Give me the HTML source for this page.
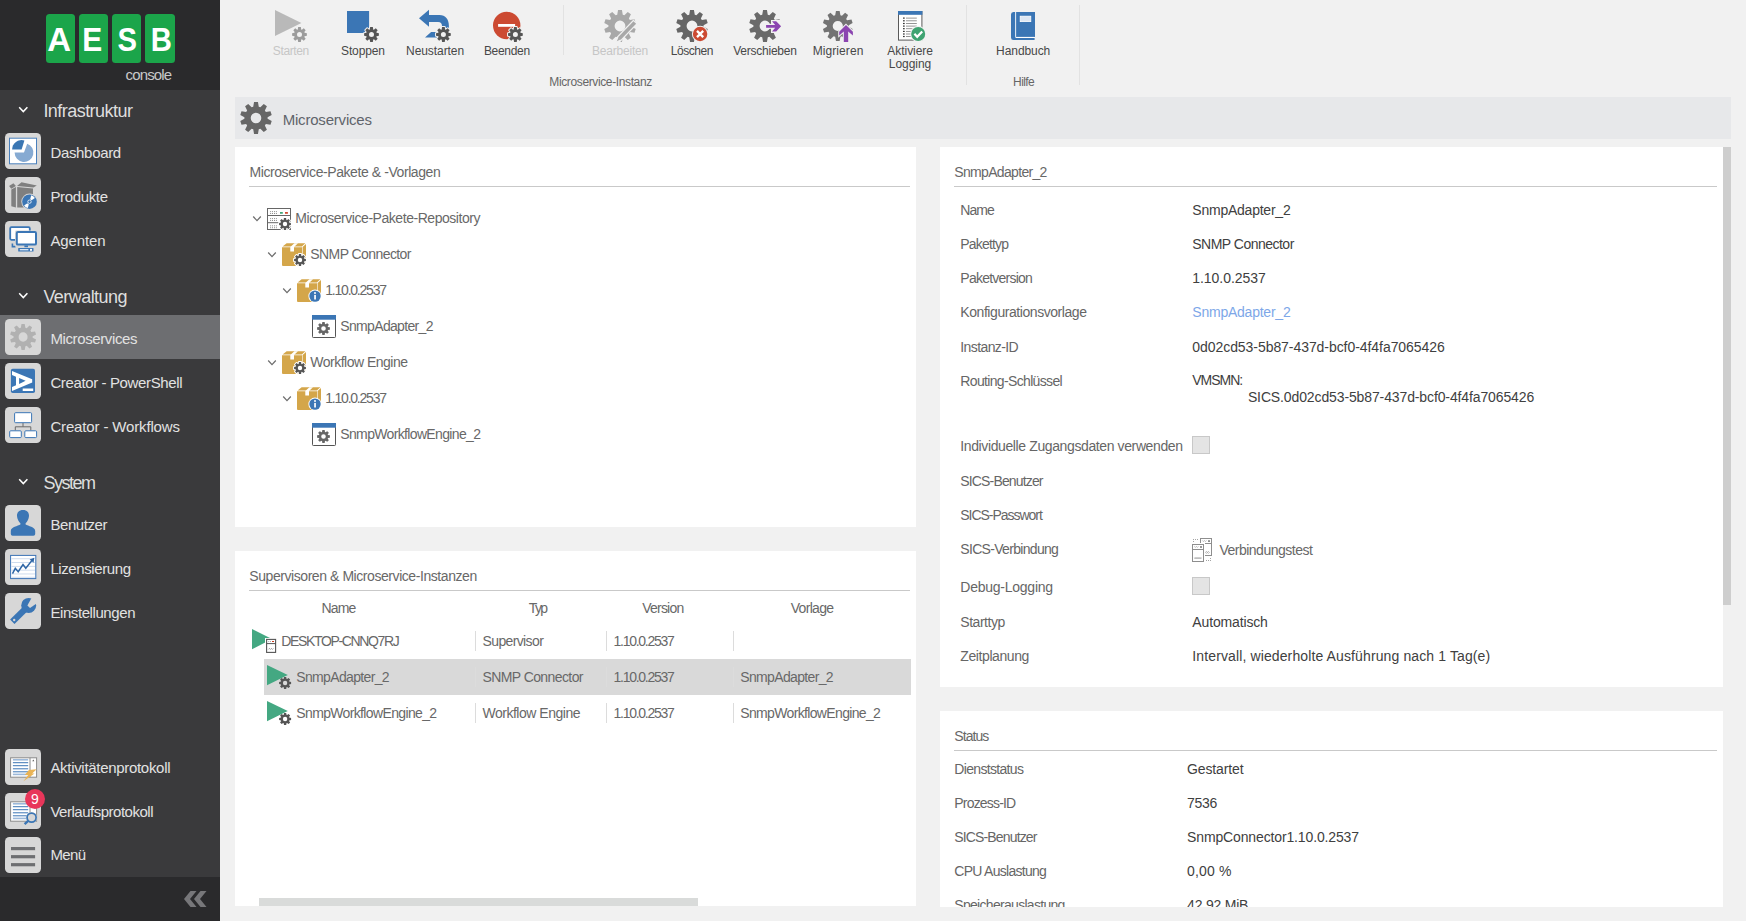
<!DOCTYPE html>
<html lang="de"><head><meta charset="utf-8"><title>AESB console - Microservices</title>
<style>
html,body{margin:0;padding:0;}
body{width:1746px;height:921px;overflow:hidden;background:#f1f1f1;position:relative;font-family:"Liberation Sans",sans-serif;}
.r{position:absolute;}
.t{position:absolute;white-space:nowrap;line-height:20px;height:20px;}
svg{position:absolute;overflow:visible;}
</style></head>
<body>
<div class="r" style="left:0px;top:0px;width:220px;height:921px;background:#3a3a3c;"></div>
<div class="r" style="left:0px;top:0px;width:220px;height:90px;background:#2a2a2c;"></div>
<div class="r" style="left:0px;top:877px;width:220px;height:44px;background:#2a2a2c;"></div>
<div class="r" style="left:45.5px;top:14px;width:29.2px;height:49px;background:#1ba54a;border-radius:3.5px;"></div>
<div class="r" style="left:78.8px;top:14px;width:29.2px;height:49px;background:#1ba54a;border-radius:3.5px;"></div>
<div class="r" style="left:112.1px;top:14px;width:29.2px;height:49px;background:#1ba54a;border-radius:3.5px;"></div>
<div class="r" style="left:145.4px;top:14px;width:29.2px;height:49px;background:#1ba54a;border-radius:3.5px;"></div>
<span class="t" style="left:47.02px;top:29.22px;font-size:34px;color:#ffffff;font-weight:bold;transform:scaleX(0.97);">A</span>
<span class="t" style="left:81.26px;top:29.22px;font-size:34px;color:#ffffff;font-weight:bold;transform:scaleX(0.88);">E</span>
<span class="t" style="left:115.86px;top:29.22px;font-size:34px;color:#ffffff;font-weight:bold;transform:scaleX(0.86);">S</span>
<span class="t" style="left:148.92px;top:29.22px;font-size:34px;color:#ffffff;font-weight:bold;transform:scaleX(0.86);">B</span>
<span class="t" style="left:125.50px;top:64.60px;font-size:15px;color:#c9c9c9;letter-spacing:-0.834px;">console</span>
<svg style="left:18px;top:105px" width="11" height="9" viewBox="0 0 11 9"><path d="M1.2 2.2 L5.3 6.6 L9.4 2.2" fill="none" stroke="#ffffff" stroke-width="1.5"/></svg>
<span class="t" style="left:43.40px;top:100.56px;font-size:18px;color:#dedede;letter-spacing:-0.544px;">Infrastruktur</span>
<svg style="left:18px;top:291px" width="11" height="9" viewBox="0 0 11 9"><path d="M1.2 2.2 L5.3 6.6 L9.4 2.2" fill="none" stroke="#ffffff" stroke-width="1.5"/></svg>
<span class="t" style="left:43.40px;top:286.56px;font-size:18px;color:#dedede;letter-spacing:-0.551px;">Verwaltung</span>
<svg style="left:18px;top:477px" width="11" height="9" viewBox="0 0 11 9"><path d="M1.2 2.2 L5.3 6.6 L9.4 2.2" fill="none" stroke="#ffffff" stroke-width="1.5"/></svg>
<span class="t" style="left:43.40px;top:472.56px;font-size:18px;color:#dedede;letter-spacing:-1.483px;">System</span>
<div class="r" style="left:0px;top:315px;width:220px;height:44px;background:#6d6e71;"></div>
<div class="r" style="left:5px;top:133px;width:36px;height:36px;background:#d7d7d7;border-radius:4.5px;"></div>
<svg style="left:5px;top:133px" width="36" height="36" viewBox="0 0 36 36"><rect x="4.5" y="5.2" width="27" height="25.6" fill="#fff" stroke="#4a80bc" stroke-width="1"/><path d="M19 19.6 L22.2 10.75 A9.4 9.4 0 1 1 9.6 19.6 Z" fill="#86aad2"/><path d="M16.6 16.6 L7.1 16.6 A9.5 9.5 0 0 1 19.4 7.5 Z" fill="#3a76b3"/></svg>
<span class="t" style="left:50.40px;top:142.60px;font-size:15px;color:#e2e2e2;letter-spacing:-0.323px;">Dashboard</span>
<div class="r" style="left:5px;top:177px;width:36px;height:36px;background:#d7d7d7;border-radius:4.5px;"></div>
<svg style="left:5px;top:177px" width="36" height="36" viewBox="0 0 36 36"><path d="M6.3 12.4 L10.9 9.9 L10.9 30.6 L6.3 29.2 Z" fill="#7f7f7f"/><path d="M12.2 9.9 L28 11.4 L28 30.6 L12.2 30.6 Z" fill="#7f7f7f"/><path d="M4.1 9.1 L8.4 6.2 L10.9 8.9 L6.3 11.7 Z" fill="#7f7f7f"/><path d="M12 9 L16.5 5.3 L31.8 8.6 L28.4 10.6 Z" fill="#7f7f7f"/><circle cx="24.5" cy="24.7" r="8.2" fill="#d7d7d7"/><circle cx="24.5" cy="24.7" r="7.3" fill="#3b76b5"/><path d="M25.17 22.19L26.21 18.32A6.6 6.6 0 0 1 29.91 20.91L26.63 23.21A2.6 2.6 0 0 0 25.17 22.19Z M23.83 27.21L22.79 31.08A6.6 6.6 0 0 1 19.09 28.49L22.37 26.19A2.6 2.6 0 0 0 23.83 27.21Z" fill="#fff"/><circle cx="24.5" cy="24.7" r="1.7" fill="none" stroke="#fff" stroke-width="0.8"/></svg>
<span class="t" style="left:50.40px;top:186.60px;font-size:15px;color:#e2e2e2;letter-spacing:-0.348px;">Produkte</span>
<div class="r" style="left:5px;top:221px;width:36px;height:36px;background:#d7d7d7;border-radius:4.5px;"></div>
<svg style="left:5px;top:221px" width="36" height="36" viewBox="0 0 36 36"><rect x="5.2" y="6.2" width="19.6" height="12.6" rx="1.2" fill="#fff" stroke="#3b76b5" stroke-width="1.8"/><path d="M7.4 22.6 L7.4 25.6 L10.6 25.6" fill="none" stroke="#3b76b5" stroke-width="1.6"/><rect x="10" y="9.6" width="23.6" height="16" rx="1.2" fill="#d7d7d7"/><rect x="11.8" y="11" width="19.2" height="12.6" rx="1.2" fill="#fff" stroke="#3b76b5" stroke-width="2"/><rect x="19.4" y="24.4" width="3.6" height="1.8" fill="#3b76b5"/><rect x="13.2" y="27" width="15.3" height="3.6" rx="0.6" fill="#3b76b5"/><rect x="14.8" y="28.2" width="8.6" height="1.1" fill="#fff"/><rect x="25" y="27.9" width="2" height="1.9" fill="#fff"/></svg>
<span class="t" style="left:50.40px;top:230.60px;font-size:15px;color:#e2e2e2;letter-spacing:-0.131px;">Agenten</span>
<div class="r" style="left:5px;top:319px;width:36px;height:36px;background:#d7d7d7;border-radius:4.5px;"></div>
<svg style="left:5px;top:319px" width="36" height="36" viewBox="0 0 36 36"><path fill-rule="evenodd" fill="#b1b1b1" d="M15.81 8.71L16.50 4.90L19.70 4.90L20.39 8.71A9.57 9.57 0 0 1 21.71 9.14L24.50 6.46L27.10 8.34L25.41 11.83A9.57 9.57 0 0 1 26.23 12.95L30.06 12.43L31.06 15.48L27.64 17.30A9.57 9.57 0 0 1 27.64 18.70L31.06 20.52L30.06 23.57L26.23 23.05A9.57 9.57 0 0 1 25.41 24.17L27.10 27.66L24.50 29.54L21.71 26.86A9.57 9.57 0 0 1 20.39 27.29L19.70 31.10L16.50 31.10L15.81 27.29A9.57 9.57 0 0 1 14.49 26.86L11.70 29.54L9.10 27.66L10.79 24.17A9.57 9.57 0 0 1 9.97 23.05L6.14 23.57L5.14 20.52L8.56 18.70A9.57 9.57 0 0 1 8.56 17.30L5.14 15.48L6.14 12.43L9.97 12.95A9.57 9.57 0 0 1 10.79 11.83L9.10 8.34L11.70 6.46L14.49 9.14A9.57 9.57 0 0 1 15.81 8.71ZM22.55 18.00A4.46 4.46 0 1 0 13.65 18.00A4.46 4.46 0 1 0 22.55 18.00Z"/></svg>
<span class="t" style="left:50.40px;top:328.60px;font-size:15px;color:#e2e2e2;letter-spacing:-0.382px;">Microservices</span>
<div class="r" style="left:5px;top:363px;width:36px;height:36px;background:#d7d7d7;border-radius:4.5px;"></div>
<svg style="left:5px;top:363px" width="36" height="36" viewBox="0 0 36 36"><rect x="5.9" y="5.8" width="24.1" height="24.2" rx="1.8" fill="#3b76b5"/><path fill="#fff" fill-rule="evenodd" d="M7 7.9 L27.2 16.2 L27.2 19.6 L7 28.1 L7 24 L11 22.3 L11 13.7 L7 12 Z M14.1 15 L20.6 17.8 L14.1 20.9 Z"/><rect x="17.7" y="25.5" width="10.5" height="2.5" fill="#fff"/></svg>
<span class="t" style="left:50.40px;top:372.60px;font-size:15px;color:#e2e2e2;letter-spacing:-0.375px;">Creator - PowerShell</span>
<div class="r" style="left:5px;top:407px;width:36px;height:36px;background:#d7d7d7;border-radius:4.5px;"></div>
<svg style="left:5px;top:407px" width="36" height="36" viewBox="0 0 36 36"><path d="M18 15.8 L18 19.8 M10.3 23.4 L10.3 19.8 L25.8 19.8 L25.8 23.4" fill="none" stroke="#6a6a6a" stroke-width="1"/><rect x="9.6" y="5.7" width="17" height="10" rx="1" fill="#fff" stroke="#3b76b5" stroke-width="1"/><rect x="4.7" y="23.8" width="11.6" height="6.8" rx="1" fill="#fff" stroke="#3b76b5" stroke-width="1"/><rect x="19.8" y="23.8" width="11.8" height="6.8" rx="1" fill="#fff" stroke="#3b76b5" stroke-width="1"/></svg>
<span class="t" style="left:50.40px;top:416.60px;font-size:15px;color:#e2e2e2;letter-spacing:-0.147px;">Creator - Workflows</span>
<div class="r" style="left:5px;top:505px;width:36px;height:36px;background:#d7d7d7;border-radius:4.5px;"></div>
<svg style="left:5px;top:505px" width="36" height="36" viewBox="0 0 36 36"><path fill="#3b76b5" d="M18 5 C22 5 24.2 7.6 24 11 C23.8 14.4 22.2 16.8 20.6 18.2 L20.6 19.4 C23 21 30.2 21.6 30.2 26 L30.2 29 Q30.2 30.8 28.4 30.8 L7.6 30.8 Q5.8 30.8 5.8 29 L5.8 26 C5.8 21.6 13 21 15.4 19.4 L15.4 18.2 C13.8 16.8 12.2 14.4 12 11 C11.8 7.6 14 5 18 5 Z"/></svg>
<span class="t" style="left:50.40px;top:514.60px;font-size:15px;color:#e2e2e2;letter-spacing:-0.420px;">Benutzer</span>
<div class="r" style="left:5px;top:549px;width:36px;height:36px;background:#d7d7d7;border-radius:4.5px;"></div>
<svg style="left:5px;top:549px" width="36" height="36" viewBox="0 0 36 36"><rect x="5.6" y="6.4" width="25.2" height="23.2" fill="#fff" stroke="#3b73b5" stroke-width="1"/><rect x="6.4" y="9.3" width="23.6" height="0.9" fill="#c9d8ec"/><rect x="6.4" y="13.1" width="23.6" height="0.9" fill="#c9d8ec"/><rect x="6.4" y="16.9" width="23.6" height="0.9" fill="#c9d8ec"/><rect x="6.4" y="20.7" width="23.6" height="0.9" fill="#c9d8ec"/><rect x="6.4" y="24.5" width="23.6" height="0.9" fill="#c9d8ec"/><rect x="6.4" y="27.8" width="23.6" height="0.9" fill="#c9d8ec"/><path d="M7.5 24.6 L10.3 19.3 L13.2 22.7 L18 15.5 L20.8 19.3 L27 11.4" fill="none" stroke="#2d65a5" stroke-width="1.5"/><path d="M29.2 8.8 L28.6 13.8 L24.6 10.4 Z" fill="#2d65a5"/></svg>
<span class="t" style="left:50.40px;top:558.60px;font-size:15px;color:#e2e2e2;letter-spacing:-0.405px;">Lizensierung</span>
<div class="r" style="left:5px;top:593px;width:36px;height:36px;background:#d7d7d7;border-radius:4.5px;"></div>
<svg style="left:5px;top:593px" width="36" height="36" viewBox="0 0 36 36"><path d="M5.1 26.6 L9.5 31.1 L22.2 18.6 L17.6 14.2 Z" fill="#3b76b5"/><circle cx="23.7" cy="12.4" r="7.5" fill="#3b76b5"/><path d="M27.2 3.8 L22.4 12.6 L25 15 L33 9.6 L33 2 Z" fill="#d7d7d7"/><circle cx="9.2" cy="27" r="1.2" fill="#d7d7d7"/></svg>
<span class="t" style="left:50.40px;top:602.60px;font-size:15px;color:#e2e2e2;letter-spacing:-0.414px;">Einstellungen</span>
<div class="r" style="left:5px;top:749px;width:36px;height:36px;background:#d7d7d7;border-radius:4.5px;"></div>
<svg style="left:5px;top:749px" width="36" height="36" viewBox="0 0 36 36"><rect x="5.6" y="8.8" width="26" height="19.4" fill="#fff" stroke="#8a8a8a" stroke-width="1"/><path d="M25 8.8 L25 28.2" stroke="#8a8a8a" stroke-width="1"/><rect x="7.9" y="10.0" width="15.3" height="1.6" fill="#9db9da"/><rect x="7.9" y="13.2" width="15.3" height="1" fill="#3b76b5"/><rect x="7.9" y="16.2" width="15.3" height="1" fill="#3b76b5"/><rect x="7.9" y="19.3" width="15.3" height="1" fill="#3b76b5"/><rect x="7.9" y="22.3" width="15.3" height="1" fill="#3b76b5"/><rect x="7.9" y="24.6" width="15.3" height="1.6" fill="#9db9da"/><path d="M27.3 12.2 L29.3 12.2 L28.3 10.6 Z" fill="#555"/><path d="M23.9 20.9 L31.6 20.2 L27.2 24.6 L29.6 24.6 L18.4 32.2 L23.2 26.1 L19.8 26.1 Z" fill="#e9b355"/></svg>
<span class="t" style="left:50.40px;top:757.60px;font-size:15px;color:#e2e2e2;letter-spacing:-0.305px;">Aktivitätenprotokoll</span>
<div class="r" style="left:5px;top:793px;width:36px;height:36px;background:#d7d7d7;border-radius:4.5px;"></div>
<svg style="left:5px;top:793px" width="36" height="36" viewBox="0 0 36 36"><rect x="5.6" y="8.8" width="26" height="19.4" fill="#fff" stroke="#8a8a8a" stroke-width="1"/><path d="M25 8.8 L25 28.2" stroke="#8a8a8a" stroke-width="1"/><rect x="7.9" y="10.0" width="15.3" height="1.6" fill="#9db9da"/><rect x="7.9" y="13.2" width="15.3" height="1" fill="#3b76b5"/><rect x="7.9" y="16.2" width="15.3" height="1" fill="#3b76b5"/><rect x="7.9" y="19.3" width="15.3" height="1" fill="#3b76b5"/><rect x="7.9" y="22.3" width="15.3" height="1" fill="#3b76b5"/><rect x="7.9" y="24.6" width="15.3" height="1.6" fill="#9db9da"/><circle cx="26.6" cy="24.6" r="5.6" fill="#d7d7d7"/><circle cx="26.6" cy="24.6" r="4.5" fill="#d7d7d7" stroke="#3b76b5" stroke-width="1.7"/><path d="M23.2 27.8 L19.6 31.2" stroke="#3b76b5" stroke-width="2.3"/></svg>
<span class="t" style="left:50.40px;top:801.60px;font-size:15px;color:#e2e2e2;letter-spacing:-0.488px;">Verlaufsprotokoll</span>
<div class="r" style="left:5px;top:837px;width:36px;height:36px;background:#d7d7d7;border-radius:4.5px;"></div>
<svg style="left:5px;top:837px" width="36" height="36" viewBox="0 0 36 36"><rect x="6" y="10" width="24.1" height="3.2" fill="#6d6e71"/><rect x="6" y="18.1" width="24.1" height="3.2" fill="#6d6e71"/><rect x="6" y="26.1" width="24.1" height="3.2" fill="#6d6e71"/></svg>
<span class="t" style="left:50.40px;top:845.10px;font-size:15px;color:#e2e2e2;letter-spacing:-0.641px;">Menü</span>
<div class="r" style="left:25px;top:789.2px;width:19.8px;height:19.8px;border-radius:10px;background:#e8365a;"></div>
<span class="t" style="left:31.11px;top:789.45px;font-size:14px;color:#ffffff;">9</span>
<svg style="left:183px;top:890px" width="24" height="18" viewBox="0 0 24 18"><path d="M7.5 1 L13.5 1 L7 9 L13.5 17 L7.5 17 L1 9 Z M17.5 1 L23.5 1 L17 9 L23.5 17 L17.5 17 L11 9 Z" fill="#77777a"/></svg>
<svg style="left:275px;top:10px" width="32" height="32" viewBox="0 0 32 32"><path d="M0 0 L26.4 13 L0 26 Z" fill="#b9b9b9"/><path fill="#f1f1f1" stroke="#f1f1f1" stroke-width="2" stroke-linejoin="round" d="M22.78 19.38L23.16 17.12L25.84 17.12L26.22 19.38A5.40 5.40 0 0 1 26.90 19.66L28.77 18.33L30.67 20.23L29.34 22.10A5.40 5.40 0 0 1 29.62 22.78L31.88 23.16L31.88 25.84L29.62 26.22A5.40 5.40 0 0 1 29.34 26.90L30.67 28.77L28.77 30.67L26.90 29.34A5.40 5.40 0 0 1 26.22 29.62L25.84 31.88L23.16 31.88L22.78 29.62A5.40 5.40 0 0 1 22.10 29.34L20.23 30.67L18.33 28.77L19.66 26.90A5.40 5.40 0 0 1 19.38 26.22L17.12 25.84L17.12 23.16L19.38 22.78A5.40 5.40 0 0 1 19.66 22.10L18.33 20.23L20.23 18.33L22.10 19.66A5.40 5.40 0 0 1 22.78 19.38ZM24.51 24.50A0.01 0.01 0 1 0 24.49 24.50A0.01 0.01 0 1 0 24.51 24.50Z"/><path fill-rule="evenodd" fill="#9c9c9c" d="M22.78 19.38L23.16 17.12L25.84 17.12L26.22 19.38A5.40 5.40 0 0 1 26.90 19.66L28.77 18.33L30.67 20.23L29.34 22.10A5.40 5.40 0 0 1 29.62 22.78L31.88 23.16L31.88 25.84L29.62 26.22A5.40 5.40 0 0 1 29.34 26.90L30.67 28.77L28.77 30.67L26.90 29.34A5.40 5.40 0 0 1 26.22 29.62L25.84 31.88L23.16 31.88L22.78 29.62A5.40 5.40 0 0 1 22.10 29.34L20.23 30.67L18.33 28.77L19.66 26.90A5.40 5.40 0 0 1 19.38 26.22L17.12 25.84L17.12 23.16L19.38 22.78A5.40 5.40 0 0 1 19.66 22.10L18.33 20.23L20.23 18.33L22.10 19.66A5.40 5.40 0 0 1 22.78 19.38ZM27.00 24.50A2.50 2.50 0 1 0 22.00 24.50A2.50 2.50 0 1 0 27.00 24.50Z"/></svg>
<span class="t" style="left:272.80px;top:40.84px;font-size:12px;color:#c6c6c6;letter-spacing:-0.365px;">Starten</span>
<svg style="left:347px;top:10px" width="32" height="32" viewBox="0 0 32 32"><rect x="0" y="1" width="22.1" height="22" fill="#3b76b5"/><path fill="#f1f1f1" stroke="#f1f1f1" stroke-width="2" stroke-linejoin="round" d="M22.78 19.38L23.16 17.12L25.84 17.12L26.22 19.38A5.40 5.40 0 0 1 26.90 19.66L28.77 18.33L30.67 20.23L29.34 22.10A5.40 5.40 0 0 1 29.62 22.78L31.88 23.16L31.88 25.84L29.62 26.22A5.40 5.40 0 0 1 29.34 26.90L30.67 28.77L28.77 30.67L26.90 29.34A5.40 5.40 0 0 1 26.22 29.62L25.84 31.88L23.16 31.88L22.78 29.62A5.40 5.40 0 0 1 22.10 29.34L20.23 30.67L18.33 28.77L19.66 26.90A5.40 5.40 0 0 1 19.38 26.22L17.12 25.84L17.12 23.16L19.38 22.78A5.40 5.40 0 0 1 19.66 22.10L18.33 20.23L20.23 18.33L22.10 19.66A5.40 5.40 0 0 1 22.78 19.38ZM24.51 24.50A0.01 0.01 0 1 0 24.49 24.50A0.01 0.01 0 1 0 24.51 24.50Z"/><path fill-rule="evenodd" fill="#555555" d="M22.78 19.38L23.16 17.12L25.84 17.12L26.22 19.38A5.40 5.40 0 0 1 26.90 19.66L28.77 18.33L30.67 20.23L29.34 22.10A5.40 5.40 0 0 1 29.62 22.78L31.88 23.16L31.88 25.84L29.62 26.22A5.40 5.40 0 0 1 29.34 26.90L30.67 28.77L28.77 30.67L26.90 29.34A5.40 5.40 0 0 1 26.22 29.62L25.84 31.88L23.16 31.88L22.78 29.62A5.40 5.40 0 0 1 22.10 29.34L20.23 30.67L18.33 28.77L19.66 26.90A5.40 5.40 0 0 1 19.38 26.22L17.12 25.84L17.12 23.16L19.38 22.78A5.40 5.40 0 0 1 19.66 22.10L18.33 20.23L20.23 18.33L22.10 19.66A5.40 5.40 0 0 1 22.78 19.38ZM27.00 24.50A2.50 2.50 0 1 0 22.00 24.50A2.50 2.50 0 1 0 27.00 24.50Z"/></svg>
<span class="t" style="left:341.00px;top:40.84px;font-size:12px;color:#484848;letter-spacing:-0.118px;">Stoppen</span>
<svg style="left:419px;top:10px" width="32" height="32" viewBox="0 0 32 32"><path fill="#3b76b5" d="M0 8.3 L10 -0.2 L10 5.1 L20.5 5.1 C26.5 5.1 29.9 9.5 29.9 16 L29.9 18 L23 18 L23 16 C23 13.4 21.6 11.9 19.2 11.9 L10 11.9 L10 16.8 Z"/><path fill="#3b76b5" d="M6 27.6 L12.1 22.1 L18 22.1 L18 27.6 Z"/><path fill="#f1f1f1" stroke="#f1f1f1" stroke-width="2" stroke-linejoin="round" d="M22.68 19.38L23.06 17.12L25.74 17.12L26.12 19.38A5.40 5.40 0 0 1 26.80 19.66L28.67 18.33L30.57 20.23L29.24 22.10A5.40 5.40 0 0 1 29.52 22.78L31.78 23.16L31.78 25.84L29.52 26.22A5.40 5.40 0 0 1 29.24 26.90L30.57 28.77L28.67 30.67L26.80 29.34A5.40 5.40 0 0 1 26.12 29.62L25.74 31.88L23.06 31.88L22.68 29.62A5.40 5.40 0 0 1 22.00 29.34L20.13 30.67L18.23 28.77L19.56 26.90A5.40 5.40 0 0 1 19.28 26.22L17.02 25.84L17.02 23.16L19.28 22.78A5.40 5.40 0 0 1 19.56 22.10L18.23 20.23L20.13 18.33L22.00 19.66A5.40 5.40 0 0 1 22.68 19.38ZM24.41 24.50A0.01 0.01 0 1 0 24.39 24.50A0.01 0.01 0 1 0 24.41 24.50Z"/><path fill-rule="evenodd" fill="#555555" d="M22.68 19.38L23.06 17.12L25.74 17.12L26.12 19.38A5.40 5.40 0 0 1 26.80 19.66L28.67 18.33L30.57 20.23L29.24 22.10A5.40 5.40 0 0 1 29.52 22.78L31.78 23.16L31.78 25.84L29.52 26.22A5.40 5.40 0 0 1 29.24 26.90L30.57 28.77L28.67 30.67L26.80 29.34A5.40 5.40 0 0 1 26.12 29.62L25.74 31.88L23.06 31.88L22.68 29.62A5.40 5.40 0 0 1 22.00 29.34L20.13 30.67L18.23 28.77L19.56 26.90A5.40 5.40 0 0 1 19.28 26.22L17.02 25.84L17.02 23.16L19.28 22.78A5.40 5.40 0 0 1 19.56 22.10L18.23 20.23L20.13 18.33L22.00 19.66A5.40 5.40 0 0 1 22.68 19.38ZM26.90 24.50A2.50 2.50 0 1 0 21.90 24.50A2.50 2.50 0 1 0 26.90 24.50Z"/></svg>
<span class="t" style="left:406.10px;top:40.84px;font-size:12px;color:#484848;letter-spacing:-0.078px;">Neustarten</span>
<svg style="left:491px;top:10px" width="32" height="32" viewBox="0 0 32 32"><circle cx="15.7" cy="15.5" r="13.7" fill="#cc4a32"/><rect x="7.1" y="14" width="17" height="2.8" fill="#fff"/><path fill="#f1f1f1" stroke="#f1f1f1" stroke-width="2" stroke-linejoin="round" d="M22.68 19.38L23.06 17.12L25.74 17.12L26.12 19.38A5.40 5.40 0 0 1 26.80 19.66L28.67 18.33L30.57 20.23L29.24 22.10A5.40 5.40 0 0 1 29.52 22.78L31.78 23.16L31.78 25.84L29.52 26.22A5.40 5.40 0 0 1 29.24 26.90L30.57 28.77L28.67 30.67L26.80 29.34A5.40 5.40 0 0 1 26.12 29.62L25.74 31.88L23.06 31.88L22.68 29.62A5.40 5.40 0 0 1 22.00 29.34L20.13 30.67L18.23 28.77L19.56 26.90A5.40 5.40 0 0 1 19.28 26.22L17.02 25.84L17.02 23.16L19.28 22.78A5.40 5.40 0 0 1 19.56 22.10L18.23 20.23L20.13 18.33L22.00 19.66A5.40 5.40 0 0 1 22.68 19.38ZM24.41 24.50A0.01 0.01 0 1 0 24.39 24.50A0.01 0.01 0 1 0 24.41 24.50Z"/><path fill-rule="evenodd" fill="#555555" d="M22.68 19.38L23.06 17.12L25.74 17.12L26.12 19.38A5.40 5.40 0 0 1 26.80 19.66L28.67 18.33L30.57 20.23L29.24 22.10A5.40 5.40 0 0 1 29.52 22.78L31.78 23.16L31.78 25.84L29.52 26.22A5.40 5.40 0 0 1 29.24 26.90L30.57 28.77L28.67 30.67L26.80 29.34A5.40 5.40 0 0 1 26.12 29.62L25.74 31.88L23.06 31.88L22.68 29.62A5.40 5.40 0 0 1 22.00 29.34L20.13 30.67L18.23 28.77L19.56 26.90A5.40 5.40 0 0 1 19.28 26.22L17.02 25.84L17.02 23.16L19.28 22.78A5.40 5.40 0 0 1 19.56 22.10L18.23 20.23L20.13 18.33L22.00 19.66A5.40 5.40 0 0 1 22.68 19.38ZM26.90 24.50A2.50 2.50 0 1 0 21.90 24.50A2.50 2.50 0 1 0 26.90 24.50Z"/></svg>
<span class="t" style="left:483.90px;top:40.84px;font-size:12px;color:#484848;letter-spacing:-0.308px;">Beenden</span>
<svg style="left:604px;top:10px" width="32" height="32" viewBox="0 0 32 32"><path fill-rule="evenodd" fill="#a8a8a8" d="M13.23 4.74L14.05 0.12L17.95 0.12L18.77 4.74A11.60 11.60 0 0 1 20.38 5.26L23.76 2.01L26.91 4.30L24.86 8.52A11.60 11.60 0 0 1 25.86 9.88L30.50 9.24L31.71 12.94L27.57 15.16A11.60 11.60 0 0 1 27.57 16.84L31.71 19.06L30.50 22.76L25.86 22.12A11.60 11.60 0 0 1 24.86 23.48L26.91 27.70L23.76 29.99L20.38 26.74A11.60 11.60 0 0 1 18.77 27.26L17.95 31.88L14.05 31.88L13.23 27.26A11.60 11.60 0 0 1 11.62 26.74L8.24 29.99L5.09 27.70L7.14 23.48A11.60 11.60 0 0 1 6.14 22.12L1.50 22.76L0.29 19.06L4.43 16.84A11.60 11.60 0 0 1 4.43 15.16L0.29 12.94L1.50 9.24L6.14 9.88A11.60 11.60 0 0 1 7.14 8.52L5.09 4.30L8.24 2.01L11.62 5.26A11.60 11.60 0 0 1 13.23 4.74ZM21.40 16.00A5.40 5.40 0 1 0 10.60 16.00A5.40 5.40 0 1 0 21.40 16.00Z"/><path d="M31.6 11.6 L12.6 31.4" stroke="#f1f1f1" stroke-width="6"/><path d="M30.8 12.4 L15.4 28.4" stroke="#a8a8a8" stroke-width="3.6"/><path d="M14.6 27.2 L16.8 29.3 L12.8 31.2 Z" fill="#a8a8a8"/></svg>
<span class="t" style="left:591.90px;top:40.84px;font-size:12px;color:#c6c6c6;letter-spacing:-0.194px;">Bearbeiten</span>
<svg style="left:676px;top:10px" width="32" height="32" viewBox="0 0 32 32"><path fill-rule="evenodd" fill="#666666" d="M13.23 4.74L14.05 0.12L17.95 0.12L18.77 4.74A11.60 11.60 0 0 1 20.38 5.26L23.76 2.01L26.91 4.30L24.86 8.52A11.60 11.60 0 0 1 25.86 9.88L30.50 9.24L31.71 12.94L27.57 15.16A11.60 11.60 0 0 1 27.57 16.84L31.71 19.06L30.50 22.76L25.86 22.12A11.60 11.60 0 0 1 24.86 23.48L26.91 27.70L23.76 29.99L20.38 26.74A11.60 11.60 0 0 1 18.77 27.26L17.95 31.88L14.05 31.88L13.23 27.26A11.60 11.60 0 0 1 11.62 26.74L8.24 29.99L5.09 27.70L7.14 23.48A11.60 11.60 0 0 1 6.14 22.12L1.50 22.76L0.29 19.06L4.43 16.84A11.60 11.60 0 0 1 4.43 15.16L0.29 12.94L1.50 9.24L6.14 9.88A11.60 11.60 0 0 1 7.14 8.52L5.09 4.30L8.24 2.01L11.62 5.26A11.60 11.60 0 0 1 13.23 4.74ZM21.40 16.00A5.40 5.40 0 1 0 10.60 16.00A5.40 5.40 0 1 0 21.40 16.00Z"/><circle cx="24.1" cy="24" r="8.2" fill="#f1f1f1"/><circle cx="24.1" cy="24" r="7.2" fill="#cc4a32"/><path d="M21 20.9 L27.2 27.1 M27.2 20.9 L21 27.1" stroke="#fff" stroke-width="2.3"/></svg>
<span class="t" style="left:670.70px;top:40.84px;font-size:12px;color:#484848;letter-spacing:-0.445px;">Löschen</span>
<svg style="left:749px;top:10px" width="32" height="32" viewBox="0 0 32 32"><path fill-rule="evenodd" fill="#6a6a6a" d="M13.23 4.74L14.05 0.12L17.95 0.12L18.77 4.74A11.60 11.60 0 0 1 20.38 5.26L23.76 2.01L26.91 4.30L24.86 8.52A11.60 11.60 0 0 1 25.86 9.88L30.50 9.24L31.71 12.94L27.57 15.16A11.60 11.60 0 0 1 27.57 16.84L31.71 19.06L30.50 22.76L25.86 22.12A11.60 11.60 0 0 1 24.86 23.48L26.91 27.70L23.76 29.99L20.38 26.74A11.60 11.60 0 0 1 18.77 27.26L17.95 31.88L14.05 31.88L13.23 27.26A11.60 11.60 0 0 1 11.62 26.74L8.24 29.99L5.09 27.70L7.14 23.48A11.60 11.60 0 0 1 6.14 22.12L1.50 22.76L0.29 19.06L4.43 16.84A11.60 11.60 0 0 1 4.43 15.16L0.29 12.94L1.50 9.24L6.14 9.88A11.60 11.60 0 0 1 7.14 8.52L5.09 4.30L8.24 2.01L11.62 5.26A11.60 11.60 0 0 1 13.23 4.74ZM21.40 16.00A5.40 5.40 0 1 0 10.60 16.00A5.40 5.40 0 1 0 21.40 16.00Z"/><path d="M22 10 L33 10 L33 23 L22 23 Z" fill="#f1f1f1"/><path d="M16 16.3 L26 16.3" stroke="#f1f1f1" stroke-width="5"/><path fill="#8b45b0" d="M17.1 14.9 L26.2 14.9 L23 11.2 L27.2 11.2 L32.1 16.3 L27.2 21.6 L23 21.6 L26.2 17.8 L17.1 17.8 Z"/></svg>
<span class="t" style="left:733.20px;top:40.84px;font-size:12px;color:#484848;letter-spacing:-0.235px;">Verschieben</span>
<svg style="left:822px;top:10px" width="32" height="32" viewBox="0 0 32 32"><path fill-rule="evenodd" fill="#737373" d="M13.18 5.37L13.96 1.01L17.64 1.01L18.42 5.37A10.95 10.95 0 0 1 19.93 5.86L23.12 2.80L26.09 4.95L24.17 8.94A10.95 10.95 0 0 1 25.10 10.23L29.49 9.62L30.62 13.11L26.72 15.20A10.95 10.95 0 0 1 26.72 16.80L30.62 18.89L29.49 22.38L25.10 21.77A10.95 10.95 0 0 1 24.17 23.06L26.09 27.05L23.12 29.20L19.93 26.14A10.95 10.95 0 0 1 18.42 26.63L17.64 30.99L13.96 30.99L13.18 26.63A10.95 10.95 0 0 1 11.67 26.14L8.48 29.20L5.51 27.05L7.43 23.06A10.95 10.95 0 0 1 6.50 21.77L2.11 22.38L0.98 18.89L4.88 16.80A10.95 10.95 0 0 1 4.88 15.20L0.98 13.11L2.11 9.62L6.50 10.23A10.95 10.95 0 0 1 7.43 8.94L5.51 4.95L8.48 2.80L11.67 5.86A10.95 10.95 0 0 1 13.18 5.37ZM20.90 16.00A5.10 5.10 0 1 0 10.70 16.00A5.10 5.10 0 1 0 20.90 16.00Z"/><path fill="#f1f1f1" stroke="#f1f1f1" stroke-width="2" d="M24 15 L30.9 21.7 L30.9 25.5 L26.2 21.4 L26.2 32 L21.8 32 L21.8 21.4 L17.2 25.5 L17.2 21.7 Z"/><path fill="#8b45b0" d="M24 15 L30.9 21.7 L30.9 25.5 L26.2 21.4 L26.2 32 L21.8 32 L21.8 21.4 L17.2 25.5 L17.2 21.7 Z"/></svg>
<span class="t" style="left:812.70px;top:40.84px;font-size:12px;color:#484848;letter-spacing:0.085px;">Migrieren</span>
<svg style="left:1007px;top:10px" width="32" height="32" viewBox="0 0 32 32"><path fill="#3b76b5" d="M6.4 1.9 L28 1.9 L28 26.9 L8.8 26.9 L8.8 27.9 L27.6 27.9 L27.6 29.9 L6.4 29.9 Q4 29.9 4 27.4 L4 4.4 Q4 1.9 6.4 1.9 Z"/><rect x="8.2" y="1.9" width="0.9" height="25" fill="#fff"/><rect x="8.6" y="26.9" width="19" height="1" fill="#fff"/><rect x="13.2" y="6.2" width="10.6" height="5.4" fill="#dde6f2" stroke="#fff" stroke-width="0.8"/></svg>
<span class="t" style="left:996.10px;top:40.84px;font-size:12px;color:#484848;letter-spacing:-0.073px;">Handbuch</span>
<svg style="left:894px;top:10px" width="32" height="32" viewBox="0 0 32 32"><rect x="4.5" y="1.5" width="23.4" height="28.6" fill="#fff" stroke="#5a5a5a" stroke-width="1"/><rect x="4" y="1" width="24.4" height="3.8" fill="#3b76b5"/><rect x="9" y="7.5" width="1.7" height="1.2" fill="#333"/><rect x="12" y="7.6499999999999995" width="10.8" height="0.9" fill="#8a8a8a"/><rect x="9" y="10.200000000000001" width="1.7" height="1.2" fill="#333"/><rect x="12" y="10.350000000000001" width="10.8" height="0.9" fill="#8a8a8a"/><rect x="9" y="12.9" width="1.7" height="1.2" fill="#333"/><rect x="12" y="13.05" width="10.8" height="0.9" fill="#8a8a8a"/><rect x="9" y="15.500000000000002" width="1.7" height="1.2" fill="#333"/><rect x="12" y="15.650000000000002" width="10.8" height="0.9" fill="#8a8a8a"/><rect x="9" y="18.099999999999998" width="1.7" height="1.2" fill="#333"/><rect x="12" y="18.25" width="10.8" height="0.9" fill="#8a8a8a"/><rect x="9" y="20.799999999999997" width="1.7" height="1.2" fill="#333"/><rect x="12" y="20.95" width="10.8" height="0.9" fill="#8a8a8a"/><rect x="9" y="23.4" width="1.7" height="1.2" fill="#333"/><rect x="12" y="23.55" width="10.8" height="0.9" fill="#8a8a8a"/><rect x="9" y="25.9" width="1.7" height="1.2" fill="#333"/><rect x="12" y="26.05" width="10.8" height="0.9" fill="#8a8a8a"/><circle cx="24.2" cy="24" r="8" fill="#f1f1f1"/><circle cx="24.2" cy="24" r="7" fill="#3fa371"/><path d="M20.4 23.8 L23.2 26.8 L28.2 21.4" fill="none" stroke="#fff" stroke-width="2.2"/></svg>
<span class="t" style="left:887.30px;top:40.84px;font-size:12px;color:#484848;letter-spacing:-0.039px;">Aktiviere</span>
<span class="t" style="left:888.80px;top:53.84px;font-size:12px;color:#484848;letter-spacing:-0.052px;">Logging</span>
<span class="t" style="left:549.30px;top:71.64px;font-size:12px;color:#666;letter-spacing:-0.375px;">Microservice-Instanz</span>
<span class="t" style="left:1013.10px;top:71.64px;font-size:12px;color:#666;letter-spacing:-0.577px;">Hilfe</span>
<div class="r" style="left:563px;top:5px;width:1px;height:50px;background:#e2e2e2;"></div>
<div class="r" style="left:966px;top:5px;width:1px;height:80px;background:#e2e2e2;"></div>
<div class="r" style="left:1079px;top:5px;width:1px;height:80px;background:#e2e2e2;"></div>
<div class="r" style="left:235px;top:97px;width:1496px;height:42px;background:#e7e8ea;"></div>
<svg style="left:240px;top:102px" width="32" height="32" viewBox="0 0 32 32"><path fill-rule="evenodd" fill="#666666" d="M13.23 4.74L14.05 0.12L17.95 0.12L18.77 4.74A11.60 11.60 0 0 1 20.38 5.26L23.76 2.01L26.91 4.30L24.86 8.52A11.60 11.60 0 0 1 25.86 9.88L30.50 9.24L31.71 12.94L27.57 15.16A11.60 11.60 0 0 1 27.57 16.84L31.71 19.06L30.50 22.76L25.86 22.12A11.60 11.60 0 0 1 24.86 23.48L26.91 27.70L23.76 29.99L20.38 26.74A11.60 11.60 0 0 1 18.77 27.26L17.95 31.88L14.05 31.88L13.23 27.26A11.60 11.60 0 0 1 11.62 26.74L8.24 29.99L5.09 27.70L7.14 23.48A11.60 11.60 0 0 1 6.14 22.12L1.50 22.76L0.29 19.06L4.43 16.84A11.60 11.60 0 0 1 4.43 15.16L0.29 12.94L1.50 9.24L6.14 9.88A11.60 11.60 0 0 1 7.14 8.52L5.09 4.30L8.24 2.01L11.62 5.26A11.60 11.60 0 0 1 13.23 4.74ZM21.30 16.00A5.30 5.30 0 1 0 10.70 16.00A5.30 5.30 0 1 0 21.30 16.00Z"/></svg>
<span class="t" style="left:282.70px;top:109.60px;font-size:15px;color:#5f646b;letter-spacing:-0.198px;">Microservices</span>
<div class="r" style="left:235px;top:147px;width:681px;height:380px;background:#ffffff;"></div>
<div class="r" style="left:235px;top:551px;width:681px;height:355px;background:#ffffff;"></div>
<div class="r" style="left:940px;top:147px;width:783px;height:540px;background:#ffffff;"></div>
<div class="r" style="left:940px;top:711px;width:783px;height:196px;background:#ffffff;"></div>
<div class="r" style="left:1723px;top:147px;width:8px;height:458px;background:#cecece;"></div>
<span class="t" style="left:249.50px;top:162.05px;font-size:14px;color:#686868;letter-spacing:-0.422px;">Microservice-Pakete &amp; -Vorlagen</span>
<div class="r" style="left:249px;top:186px;width:661px;height:1px;background:#c9c9c9;"></div>
<svg style="left:252px;top:215px" width="10" height="8" viewBox="0 0 10 8"><path d="M1.2 1.5 L5 5.6 L8.8 1.5" fill="none" stroke="#6e6e6e" stroke-width="1.25"/></svg>
<svg style="left:267px;top:206px" width="24" height="24" viewBox="0 0 24 24"><rect x="0.5" y="2.5" width="23" height="21" fill="#fff" stroke="#666" stroke-width="1"/><path d="M0.5 9.5 L23.5 9.5 M0.5 16.7 L23.5 16.7" stroke="#666" stroke-width="1"/><rect x="3.2" y="5.2" width="0.9" height="0.9" fill="#777"/><rect x="5.1" y="5.2" width="0.9" height="0.9" fill="#777"/><rect x="7.0" y="5.2" width="0.9" height="0.9" fill="#777"/><rect x="8.9" y="5.2" width="0.9" height="0.9" fill="#777"/><rect x="3.2" y="7.1" width="0.9" height="0.9" fill="#777"/><rect x="5.1" y="7.1" width="0.9" height="0.9" fill="#777"/><rect x="7.0" y="7.1" width="0.9" height="0.9" fill="#777"/><rect x="8.9" y="7.1" width="0.9" height="0.9" fill="#777"/><rect x="3.2" y="12.2" width="0.9" height="0.9" fill="#777"/><rect x="5.1" y="12.2" width="0.9" height="0.9" fill="#777"/><rect x="7.0" y="12.2" width="0.9" height="0.9" fill="#777"/><rect x="8.9" y="12.2" width="0.9" height="0.9" fill="#777"/><rect x="3.2" y="14.1" width="0.9" height="0.9" fill="#777"/><rect x="5.1" y="14.1" width="0.9" height="0.9" fill="#777"/><rect x="7.0" y="14.1" width="0.9" height="0.9" fill="#777"/><rect x="8.9" y="14.1" width="0.9" height="0.9" fill="#777"/><rect x="3.2" y="19.4" width="0.9" height="0.9" fill="#777"/><rect x="5.1" y="19.4" width="0.9" height="0.9" fill="#777"/><rect x="7.0" y="19.4" width="0.9" height="0.9" fill="#777"/><rect x="8.9" y="19.4" width="0.9" height="0.9" fill="#777"/><rect x="3.2" y="21.3" width="0.9" height="0.9" fill="#777"/><rect x="5.1" y="21.3" width="0.9" height="0.9" fill="#777"/><rect x="7.0" y="21.3" width="0.9" height="0.9" fill="#777"/><rect x="8.9" y="21.3" width="0.9" height="0.9" fill="#777"/><rect x="13" y="6.1" width="2.8" height="1.6" fill="#2e9e6b"/><rect x="18" y="6.1" width="2.9" height="1.6" fill="#cc3a1e"/><path fill="#fff" stroke="#fff" stroke-width="2" stroke-linejoin="round" d="M16.62 13.90L16.93 12.10L19.07 12.10L19.38 13.90A4.32 4.32 0 0 1 19.92 14.13L21.41 13.07L22.93 14.59L21.87 16.08A4.32 4.32 0 0 1 22.10 16.62L23.90 16.93L23.90 19.07L22.10 19.38A4.32 4.32 0 0 1 21.87 19.92L22.93 21.41L21.41 22.93L19.92 21.87A4.32 4.32 0 0 1 19.38 22.10L19.07 23.90L16.93 23.90L16.62 22.10A4.32 4.32 0 0 1 16.08 21.87L14.59 22.93L13.07 21.41L14.13 19.92A4.32 4.32 0 0 1 13.90 19.38L12.10 19.07L12.10 16.93L13.90 16.62A4.32 4.32 0 0 1 14.13 16.08L13.07 14.59L14.59 13.07L16.08 14.13A4.32 4.32 0 0 1 16.62 13.90ZM18.01 18.00A0.01 0.01 0 1 0 17.99 18.00A0.01 0.01 0 1 0 18.01 18.00Z"/><path fill-rule="evenodd" fill="#555555" d="M16.62 13.90L16.93 12.10L19.07 12.10L19.38 13.90A4.32 4.32 0 0 1 19.92 14.13L21.41 13.07L22.93 14.59L21.87 16.08A4.32 4.32 0 0 1 22.10 16.62L23.90 16.93L23.90 19.07L22.10 19.38A4.32 4.32 0 0 1 21.87 19.92L22.93 21.41L21.41 22.93L19.92 21.87A4.32 4.32 0 0 1 19.38 22.10L19.07 23.90L16.93 23.90L16.62 22.10A4.32 4.32 0 0 1 16.08 21.87L14.59 22.93L13.07 21.41L14.13 19.92A4.32 4.32 0 0 1 13.90 19.38L12.10 19.07L12.10 16.93L13.90 16.62A4.32 4.32 0 0 1 14.13 16.08L13.07 14.59L14.59 13.07L16.08 14.13A4.32 4.32 0 0 1 16.62 13.90ZM20.20 18.00A2.20 2.20 0 1 0 15.80 18.00A2.20 2.20 0 1 0 20.20 18.00Z"/></svg>
<span class="t" style="left:295.30px;top:208.15px;font-size:14px;color:#686868;letter-spacing:-0.455px;">Microservice-Pakete-Repository</span>
<svg style="left:267px;top:251px" width="10" height="8" viewBox="0 0 10 8"><path d="M1.2 1.5 L5 5.6 L8.8 1.5" fill="none" stroke="#6e6e6e" stroke-width="1.25"/></svg>
<svg style="left:282px;top:242px" width="24" height="24" viewBox="0 0 24 24"><path d="M0 5.2 L20 5.2 L20 23.9 L1 23.9 Q0 23.9 0 22.9 Z" fill="#d4a64a"/><path d="M0.6 4.6 L4.6 1.2 L23.4 1.2 L19.8 4.6 Z" fill="#d4a64a"/><path d="M20.6 5 L24 1.9 L24 19.8 L20.6 23.5 Z" fill="#d4a64a"/><path d="M12.4 1.2 L16 1.2 L12 5 L12 9.6 L8.3 9.6 L8.3 5 Z" fill="#fff"/><path fill="#fff" stroke="#fff" stroke-width="2" stroke-linejoin="round" d="M16.62 13.90L16.93 12.10L19.07 12.10L19.38 13.90A4.32 4.32 0 0 1 19.92 14.13L21.41 13.07L22.93 14.59L21.87 16.08A4.32 4.32 0 0 1 22.10 16.62L23.90 16.93L23.90 19.07L22.10 19.38A4.32 4.32 0 0 1 21.87 19.92L22.93 21.41L21.41 22.93L19.92 21.87A4.32 4.32 0 0 1 19.38 22.10L19.07 23.90L16.93 23.90L16.62 22.10A4.32 4.32 0 0 1 16.08 21.87L14.59 22.93L13.07 21.41L14.13 19.92A4.32 4.32 0 0 1 13.90 19.38L12.10 19.07L12.10 16.93L13.90 16.62A4.32 4.32 0 0 1 14.13 16.08L13.07 14.59L14.59 13.07L16.08 14.13A4.32 4.32 0 0 1 16.62 13.90ZM18.01 18.00A0.01 0.01 0 1 0 17.99 18.00A0.01 0.01 0 1 0 18.01 18.00Z"/><path fill-rule="evenodd" fill="#555555" d="M16.62 13.90L16.93 12.10L19.07 12.10L19.38 13.90A4.32 4.32 0 0 1 19.92 14.13L21.41 13.07L22.93 14.59L21.87 16.08A4.32 4.32 0 0 1 22.10 16.62L23.90 16.93L23.90 19.07L22.10 19.38A4.32 4.32 0 0 1 21.87 19.92L22.93 21.41L21.41 22.93L19.92 21.87A4.32 4.32 0 0 1 19.38 22.10L19.07 23.90L16.93 23.90L16.62 22.10A4.32 4.32 0 0 1 16.08 21.87L14.59 22.93L13.07 21.41L14.13 19.92A4.32 4.32 0 0 1 13.90 19.38L12.10 19.07L12.10 16.93L13.90 16.62A4.32 4.32 0 0 1 14.13 16.08L13.07 14.59L14.59 13.07L16.08 14.13A4.32 4.32 0 0 1 16.62 13.90ZM20.20 18.00A2.20 2.20 0 1 0 15.80 18.00A2.20 2.20 0 1 0 20.20 18.00Z"/></svg>
<span class="t" style="left:310.30px;top:244.15px;font-size:14px;color:#686868;letter-spacing:-0.576px;">SNMP Connector</span>
<svg style="left:282px;top:287px" width="10" height="8" viewBox="0 0 10 8"><path d="M1.2 1.5 L5 5.6 L8.8 1.5" fill="none" stroke="#6e6e6e" stroke-width="1.25"/></svg>
<svg style="left:297px;top:278px" width="24" height="24" viewBox="0 0 24 24"><path d="M0 5.2 L20 5.2 L20 23.9 L1 23.9 Q0 23.9 0 22.9 Z" fill="#d4a64a"/><path d="M0.6 4.6 L4.6 1.2 L23.4 1.2 L19.8 4.6 Z" fill="#d4a64a"/><path d="M20.6 5 L24 1.9 L24 19.8 L20.6 23.5 Z" fill="#d4a64a"/><path d="M12.4 1.2 L16 1.2 L12 5 L12 9.6 L8.3 9.6 L8.3 5 Z" fill="#fff"/><circle cx="18" cy="18.1" r="6.6" fill="#fff"/><circle cx="18" cy="18.1" r="5.7" fill="#3b76b5"/><rect x="17.2" y="16.9" width="1.7" height="4.6" fill="#fff"/><circle cx="18" cy="15.1" r="1" fill="#fff"/></svg>
<span class="t" style="left:325.30px;top:280.15px;font-size:14px;color:#686868;letter-spacing:-1.226px;">1.10.0.2537</span>
<svg style="left:312px;top:314px" width="24" height="24" viewBox="0 0 24 24"><rect x="0.5" y="1.5" width="23" height="22" rx="0.8" fill="#fff" stroke="#555" stroke-width="1"/><rect x="0" y="1" width="24" height="4.7" fill="#3b76b5"/><path fill-rule="evenodd" fill="#666" d="M10.01 10.06L10.34 8.11L12.66 8.11L12.99 10.06A4.68 4.68 0 0 1 13.58 10.31L15.20 9.16L16.84 10.80L15.69 12.42A4.68 4.68 0 0 1 15.94 13.01L17.89 13.34L17.89 15.66L15.94 15.99A4.68 4.68 0 0 1 15.69 16.58L16.84 18.20L15.20 19.84L13.58 18.69A4.68 4.68 0 0 1 12.99 18.94L12.66 20.89L10.34 20.89L10.01 18.94A4.68 4.68 0 0 1 9.42 18.69L7.80 19.84L6.16 18.20L7.31 16.58A4.68 4.68 0 0 1 7.06 15.99L5.11 15.66L5.11 13.34L7.06 13.01A4.68 4.68 0 0 1 7.31 12.42L6.16 10.80L7.80 9.16L9.42 10.31A4.68 4.68 0 0 1 10.01 10.06ZM13.80 14.50A2.30 2.30 0 1 0 9.20 14.50A2.30 2.30 0 1 0 13.80 14.50Z"/></svg>
<span class="t" style="left:340.30px;top:316.15px;font-size:14px;color:#686868;letter-spacing:-0.665px;">SnmpAdapter_2</span>
<svg style="left:267px;top:359px" width="10" height="8" viewBox="0 0 10 8"><path d="M1.2 1.5 L5 5.6 L8.8 1.5" fill="none" stroke="#6e6e6e" stroke-width="1.25"/></svg>
<svg style="left:282px;top:350px" width="24" height="24" viewBox="0 0 24 24"><path d="M0 5.2 L20 5.2 L20 23.9 L1 23.9 Q0 23.9 0 22.9 Z" fill="#d4a64a"/><path d="M0.6 4.6 L4.6 1.2 L23.4 1.2 L19.8 4.6 Z" fill="#d4a64a"/><path d="M20.6 5 L24 1.9 L24 19.8 L20.6 23.5 Z" fill="#d4a64a"/><path d="M12.4 1.2 L16 1.2 L12 5 L12 9.6 L8.3 9.6 L8.3 5 Z" fill="#fff"/><path fill="#fff" stroke="#fff" stroke-width="2" stroke-linejoin="round" d="M16.62 13.90L16.93 12.10L19.07 12.10L19.38 13.90A4.32 4.32 0 0 1 19.92 14.13L21.41 13.07L22.93 14.59L21.87 16.08A4.32 4.32 0 0 1 22.10 16.62L23.90 16.93L23.90 19.07L22.10 19.38A4.32 4.32 0 0 1 21.87 19.92L22.93 21.41L21.41 22.93L19.92 21.87A4.32 4.32 0 0 1 19.38 22.10L19.07 23.90L16.93 23.90L16.62 22.10A4.32 4.32 0 0 1 16.08 21.87L14.59 22.93L13.07 21.41L14.13 19.92A4.32 4.32 0 0 1 13.90 19.38L12.10 19.07L12.10 16.93L13.90 16.62A4.32 4.32 0 0 1 14.13 16.08L13.07 14.59L14.59 13.07L16.08 14.13A4.32 4.32 0 0 1 16.62 13.90ZM18.01 18.00A0.01 0.01 0 1 0 17.99 18.00A0.01 0.01 0 1 0 18.01 18.00Z"/><path fill-rule="evenodd" fill="#555555" d="M16.62 13.90L16.93 12.10L19.07 12.10L19.38 13.90A4.32 4.32 0 0 1 19.92 14.13L21.41 13.07L22.93 14.59L21.87 16.08A4.32 4.32 0 0 1 22.10 16.62L23.90 16.93L23.90 19.07L22.10 19.38A4.32 4.32 0 0 1 21.87 19.92L22.93 21.41L21.41 22.93L19.92 21.87A4.32 4.32 0 0 1 19.38 22.10L19.07 23.90L16.93 23.90L16.62 22.10A4.32 4.32 0 0 1 16.08 21.87L14.59 22.93L13.07 21.41L14.13 19.92A4.32 4.32 0 0 1 13.90 19.38L12.10 19.07L12.10 16.93L13.90 16.62A4.32 4.32 0 0 1 14.13 16.08L13.07 14.59L14.59 13.07L16.08 14.13A4.32 4.32 0 0 1 16.62 13.90ZM20.20 18.00A2.20 2.20 0 1 0 15.80 18.00A2.20 2.20 0 1 0 20.20 18.00Z"/></svg>
<span class="t" style="left:310.30px;top:352.15px;font-size:14px;color:#686868;letter-spacing:-0.507px;">Workflow Engine</span>
<svg style="left:282px;top:395px" width="10" height="8" viewBox="0 0 10 8"><path d="M1.2 1.5 L5 5.6 L8.8 1.5" fill="none" stroke="#6e6e6e" stroke-width="1.25"/></svg>
<svg style="left:297px;top:386px" width="24" height="24" viewBox="0 0 24 24"><path d="M0 5.2 L20 5.2 L20 23.9 L1 23.9 Q0 23.9 0 22.9 Z" fill="#d4a64a"/><path d="M0.6 4.6 L4.6 1.2 L23.4 1.2 L19.8 4.6 Z" fill="#d4a64a"/><path d="M20.6 5 L24 1.9 L24 19.8 L20.6 23.5 Z" fill="#d4a64a"/><path d="M12.4 1.2 L16 1.2 L12 5 L12 9.6 L8.3 9.6 L8.3 5 Z" fill="#fff"/><circle cx="18" cy="18.1" r="6.6" fill="#fff"/><circle cx="18" cy="18.1" r="5.7" fill="#3b76b5"/><rect x="17.2" y="16.9" width="1.7" height="4.6" fill="#fff"/><circle cx="18" cy="15.1" r="1" fill="#fff"/></svg>
<span class="t" style="left:325.30px;top:388.15px;font-size:14px;color:#686868;letter-spacing:-1.226px;">1.10.0.2537</span>
<svg style="left:312px;top:422px" width="24" height="24" viewBox="0 0 24 24"><rect x="0.5" y="1.5" width="23" height="22" rx="0.8" fill="#fff" stroke="#555" stroke-width="1"/><rect x="0" y="1" width="24" height="4.7" fill="#3b76b5"/><path fill-rule="evenodd" fill="#666" d="M10.01 10.06L10.34 8.11L12.66 8.11L12.99 10.06A4.68 4.68 0 0 1 13.58 10.31L15.20 9.16L16.84 10.80L15.69 12.42A4.68 4.68 0 0 1 15.94 13.01L17.89 13.34L17.89 15.66L15.94 15.99A4.68 4.68 0 0 1 15.69 16.58L16.84 18.20L15.20 19.84L13.58 18.69A4.68 4.68 0 0 1 12.99 18.94L12.66 20.89L10.34 20.89L10.01 18.94A4.68 4.68 0 0 1 9.42 18.69L7.80 19.84L6.16 18.20L7.31 16.58A4.68 4.68 0 0 1 7.06 15.99L5.11 15.66L5.11 13.34L7.06 13.01A4.68 4.68 0 0 1 7.31 12.42L6.16 10.80L7.80 9.16L9.42 10.31A4.68 4.68 0 0 1 10.01 10.06ZM13.80 14.50A2.30 2.30 0 1 0 9.20 14.50A2.30 2.30 0 1 0 13.80 14.50Z"/></svg>
<span class="t" style="left:340.30px;top:424.15px;font-size:14px;color:#686868;letter-spacing:-0.650px;">SnmpWorkflowEngine_2</span>
<span class="t" style="left:249.30px;top:565.75px;font-size:14px;color:#686868;letter-spacing:-0.435px;">Supervisoren &amp; Microservice-Instanzen</span>
<div class="r" style="left:249px;top:590px;width:661px;height:1px;background:#c9c9c9;"></div>
<span class="t" style="left:321.40px;top:598.15px;font-size:14px;color:#686868;letter-spacing:-0.815px;">Name</span>
<span class="t" style="left:528.80px;top:598.15px;font-size:14px;color:#686868;letter-spacing:-1.683px;">Typ</span>
<span class="t" style="left:642.30px;top:598.15px;font-size:14px;color:#686868;letter-spacing:-0.800px;">Version</span>
<span class="t" style="left:790.70px;top:598.15px;font-size:14px;color:#686868;letter-spacing:-0.681px;">Vorlage</span>
<div class="r" style="left:264px;top:659px;width:647px;height:36px;background:#d9d9d9;"></div>
<svg style="left:251px;top:629px" width="24" height="24" viewBox="0 0 24 24"><path d="M1 0 L21 10.1 L1 20.2 Z" fill="#44a882"/><rect x="14" y="9" width="12" height="16" fill="#fff"/><rect x="15.6" y="10.4" width="9" height="13" fill="#fff" stroke="#555" stroke-width="1.1"/><path d="M15.6 14.6 L24.6 14.6" stroke="#555" stroke-width="1"/><rect x="21" y="12" width="2" height="1" fill="#cc3a1e"/><rect x="17.4" y="12" width="0.8" height="0.8" fill="#777"/><rect x="19" y="12" width="0.8" height="0.8" fill="#777"/><path d="M17.4 20.4 L18.4 19.4 L19.4 20.4 L20.4 19.4 L21.4 20.4 L22.4 19.4" fill="none" stroke="#777" stroke-width="0.7"/></svg>
<span class="t" style="left:281.30px;top:630.85px;font-size:14px;color:#686868;letter-spacing:-1.360px;">DESKTOP-CNNQ7RJ</span>
<span class="t" style="left:482.50px;top:630.85px;font-size:14px;color:#686868;letter-spacing:-0.624px;">Supervisor</span>
<span class="t" style="left:613.50px;top:630.85px;font-size:14px;color:#686868;letter-spacing:-1.266px;">1.10.0.2537</span>
<div class="r" style="left:475px;top:631px;width:1px;height:20px;background:#dcdcdc;"></div>
<div class="r" style="left:606px;top:631px;width:1px;height:20px;background:#dcdcdc;"></div>
<div class="r" style="left:733px;top:631px;width:1px;height:20px;background:#dcdcdc;"></div>
<svg style="left:266px;top:665px" width="24" height="24" viewBox="0 0 24 24"><path d="M1 0 L21.8 10.1 L1 20.2 Z" fill="#44a882"/><path fill-rule="evenodd" fill="#555555" d="M17.70 13.84L18.01 12.00L20.19 12.00L20.50 13.84A4.39 4.39 0 0 1 21.06 14.07L22.57 12.98L24.12 14.53L23.03 16.04A4.39 4.39 0 0 1 23.26 16.60L25.10 16.91L25.10 19.09L23.26 19.40A4.39 4.39 0 0 1 23.03 19.96L24.12 21.47L22.57 23.02L21.06 21.93A4.39 4.39 0 0 1 20.50 22.16L20.19 24.00L18.01 24.00L17.70 22.16A4.39 4.39 0 0 1 17.14 21.93L15.63 23.02L14.08 21.47L15.17 19.96A4.39 4.39 0 0 1 14.94 19.40L13.10 19.09L13.10 16.91L14.94 16.60A4.39 4.39 0 0 1 15.17 16.04L14.08 14.53L15.63 12.98L17.14 14.07A4.39 4.39 0 0 1 17.70 13.84ZM21.30 18.00A2.20 2.20 0 1 0 16.90 18.00A2.20 2.20 0 1 0 21.30 18.00Z"/></svg>
<span class="t" style="left:296.30px;top:666.85px;font-size:14px;color:#686868;letter-spacing:-0.657px;">SnmpAdapter_2</span>
<span class="t" style="left:482.50px;top:666.85px;font-size:14px;color:#686868;letter-spacing:-0.591px;">SNMP Connector</span>
<span class="t" style="left:613.50px;top:666.85px;font-size:14px;color:#686868;letter-spacing:-1.266px;">1.10.0.2537</span>
<span class="t" style="left:740.30px;top:666.85px;font-size:14px;color:#686868;letter-spacing:-0.657px;">SnmpAdapter_2</span>
<div class="r" style="left:475px;top:667px;width:1px;height:20px;background:#dcdcdc;"></div>
<div class="r" style="left:606px;top:667px;width:1px;height:20px;background:#dcdcdc;"></div>
<div class="r" style="left:733px;top:667px;width:1px;height:20px;background:#dcdcdc;"></div>
<svg style="left:266px;top:701px" width="24" height="24" viewBox="0 0 24 24"><path d="M1 0 L21.8 10.1 L1 20.2 Z" fill="#44a882"/><path fill-rule="evenodd" fill="#555555" d="M17.70 13.84L18.01 12.00L20.19 12.00L20.50 13.84A4.39 4.39 0 0 1 21.06 14.07L22.57 12.98L24.12 14.53L23.03 16.04A4.39 4.39 0 0 1 23.26 16.60L25.10 16.91L25.10 19.09L23.26 19.40A4.39 4.39 0 0 1 23.03 19.96L24.12 21.47L22.57 23.02L21.06 21.93A4.39 4.39 0 0 1 20.50 22.16L20.19 24.00L18.01 24.00L17.70 22.16A4.39 4.39 0 0 1 17.14 21.93L15.63 23.02L14.08 21.47L15.17 19.96A4.39 4.39 0 0 1 14.94 19.40L13.10 19.09L13.10 16.91L14.94 16.60A4.39 4.39 0 0 1 15.17 16.04L14.08 14.53L15.63 12.98L17.14 14.07A4.39 4.39 0 0 1 17.70 13.84ZM21.30 18.00A2.20 2.20 0 1 0 16.90 18.00A2.20 2.20 0 1 0 21.30 18.00Z"/></svg>
<span class="t" style="left:296.30px;top:702.85px;font-size:14px;color:#686868;letter-spacing:-0.645px;">SnmpWorkflowEngine_2</span>
<span class="t" style="left:482.50px;top:702.85px;font-size:14px;color:#686868;letter-spacing:-0.485px;">Workflow Engine</span>
<span class="t" style="left:613.50px;top:702.85px;font-size:14px;color:#686868;letter-spacing:-1.266px;">1.10.0.2537</span>
<span class="t" style="left:740.30px;top:702.85px;font-size:14px;color:#686868;letter-spacing:-0.655px;">SnmpWorkflowEngine_2</span>
<div class="r" style="left:475px;top:703px;width:1px;height:20px;background:#dcdcdc;"></div>
<div class="r" style="left:606px;top:703px;width:1px;height:20px;background:#dcdcdc;"></div>
<div class="r" style="left:733px;top:703px;width:1px;height:20px;background:#dcdcdc;"></div>
<div class="r" style="left:259px;top:898px;width:439px;height:8px;background:#d9dbda;"></div>
<span class="t" style="left:954.30px;top:162.15px;font-size:14px;color:#686868;letter-spacing:-0.674px;">SnmpAdapter_2</span>
<div class="r" style="left:954px;top:186px;width:763px;height:1px;background:#c9c9c9;"></div>
<span class="t" style="left:960.30px;top:200.35px;font-size:14px;color:#666666;letter-spacing:-0.915px;">Name</span>
<span class="t" style="left:1192.30px;top:200.35px;font-size:14px;color:#404040;letter-spacing:-0.232px;">SnmpAdapter_2</span>
<span class="t" style="left:960.30px;top:234.15px;font-size:14px;color:#666666;letter-spacing:-0.811px;">Pakettyp</span>
<span class="t" style="left:1192.30px;top:234.15px;font-size:14px;color:#404040;letter-spacing:-0.514px;">SNMP Connector</span>
<span class="t" style="left:960.30px;top:268.35px;font-size:14px;color:#666666;letter-spacing:-0.758px;">Paketversion</span>
<span class="t" style="left:1192.30px;top:268.35px;font-size:14px;color:#404040;letter-spacing:-0.056px;">1.10.0.2537</span>
<span class="t" style="left:960.30px;top:302.25px;font-size:14px;color:#666666;letter-spacing:-0.436px;">Konfigurationsvorlage</span>
<span class="t" style="left:1192.30px;top:302.25px;font-size:14px;color:#7da7e8;letter-spacing:-0.232px;">SnmpAdapter_2</span>
<span class="t" style="left:960.30px;top:337.35px;font-size:14px;color:#666666;letter-spacing:-0.600px;">Instanz-ID</span>
<span class="t" style="left:1192.30px;top:337.35px;font-size:14px;color:#404040;letter-spacing:-0.059px;">0d02cd53-5b87-437d-bcf0-4f4fa7065426</span>
<span class="t" style="left:960.30px;top:371.05px;font-size:14px;color:#666666;letter-spacing:-0.652px;">Routing-Schlüssel</span>
<span class="t" style="left:1192.30px;top:369.95px;font-size:14px;color:#404040;letter-spacing:-1.040px;">VMSMN:</span>
<span class="t" style="left:960.30px;top:436.35px;font-size:14px;color:#666666;letter-spacing:-0.386px;">Individuelle Zugangsdaten verwenden</span>
<span class="t" style="left:960.30px;top:471.45px;font-size:14px;color:#666666;letter-spacing:-0.848px;">SICS-Benutzer</span>
<span class="t" style="left:960.30px;top:505.15px;font-size:14px;color:#666666;letter-spacing:-1.034px;">SICS-Passwort</span>
<span class="t" style="left:960.30px;top:539.15px;font-size:14px;color:#666666;letter-spacing:-0.685px;">SICS-Verbindung</span>
<span class="t" style="left:960.30px;top:577.25px;font-size:14px;color:#666666;letter-spacing:-0.246px;">Debug-Logging</span>
<span class="t" style="left:960.30px;top:611.65px;font-size:14px;color:#666666;letter-spacing:-0.463px;">Starttyp</span>
<span class="t" style="left:1192.30px;top:611.65px;font-size:14px;color:#404040;letter-spacing:-0.144px;">Automatisch</span>
<span class="t" style="left:960.30px;top:646.05px;font-size:14px;color:#666666;letter-spacing:-0.407px;">Zeitplanung</span>
<span class="t" style="left:1192.30px;top:646.05px;font-size:14px;color:#404040;letter-spacing:0.120px;">Intervall, wiederholte Ausführung nach 1 Tag(e)</span>
<span class="t" style="left:1247.90px;top:387.15px;font-size:14px;color:#404040;letter-spacing:-0.120px;">SICS.0d02cd53-5b87-437d-bcf0-4f4fa7065426</span>
<div class="r" style="left:1192px;top:436px;width:15.5px;height:15.5px;background:#e4e4e4;border:1px solid #c8c8c8;"></div>
<div class="r" style="left:1192px;top:577px;width:15.5px;height:15.5px;background:#e4e4e4;border:1px solid #c8c8c8;"></div>
<svg style="left:1190px;top:538px" width="24" height="24" viewBox="0 0 24 24"><rect x="10.5" y="0.5" width="11" height="17" fill="#fff" stroke="#8e8e8e" stroke-width="1"/><path d="M10.5 5.5 L21.5 5.5" stroke="#8e8e8e" stroke-width="1"/><path d="M12.4 2.5 L13.4 3.5 L14.4 2.5 L15.4 3.5 L16.4 2.5" fill="none" stroke="#8e8e8e" stroke-width="0.6"/><rect x="18" y="2.2" width="2" height="1.8" fill="#8e8e8e"/><path d="M15.4 14.4 L16.4 13.4 L17.4 14.4 L18.4 13.4 L19.4 14.4 L18.4 15.4 L17.4 14.4 L16.4 15.4 Z" fill="none" stroke="#8e8e8e" stroke-width="0.6"/><rect x="1" y="5" width="14" height="20" fill="#fff"/><rect x="2.5" y="6.5" width="11" height="17" fill="#fff" stroke="#8e8e8e" stroke-width="1"/><path d="M2.5 11.5 L13.5 11.5" stroke="#8e8e8e" stroke-width="1"/><path d="M4.4 8.4 L5.4 9.4 L6.4 8.4 L7.4 9.4 L8.4 8.4" fill="none" stroke="#8e8e8e" stroke-width="0.6"/><rect x="10" y="8.1" width="2" height="1.8" fill="#8e8e8e"/><path d="M4.4 20.6 L5.4 19.6 L6.4 20.6 L7.4 19.6 L8.4 20.6 L9.4 19.6 L10.4 20.6 L11.4 19.6 M4.4 19.6 L5.4 20.6 L6.4 19.6 L7.4 20.6 L8.4 19.6 L9.4 20.6 L10.4 19.6 L11.4 20.6" fill="none" stroke="#8e8e8e" stroke-width="0.6"/><rect x="3.0" y="1.0" width="1" height="1" fill="#a4a4a4"/><rect x="5.0" y="1.0" width="1" height="1" fill="#a4a4a4"/><rect x="7.0" y="1.0" width="1" height="1" fill="#a4a4a4"/><rect x="3.0" y="3.0" width="1" height="1" fill="#a4a4a4"/><rect x="16.0" y="22.0" width="1" height="1" fill="#a4a4a4"/><rect x="18.0" y="22.0" width="1" height="1" fill="#a4a4a4"/><rect x="20.0" y="22.0" width="1" height="1" fill="#a4a4a4"/><rect x="20.0" y="20.0" width="1" height="1" fill="#a4a4a4"/></svg>
<span class="t" style="left:1219.40px;top:540.15px;font-size:14px;color:#686868;letter-spacing:-0.494px;">Verbindungstest</span>
<div class="r" style="left:940px;top:711px;width:783px;height:196px;overflow:hidden;">
<span class="t" style="left:14.30px;top:15.45px;font-size:14px;color:#686868;letter-spacing:-0.938px;">Status</span>
<div class="r" style="left:14px;top:39px;width:763px;height:1px;background:#c9c9c9;"></div>
<span class="t" style="left:14.30px;top:48.45px;font-size:14px;color:#666666;letter-spacing:-0.676px;">Dienststatus</span>
<span class="t" style="left:247.10px;top:48.45px;font-size:14px;color:#404040;letter-spacing:-0.135px;">Gestartet</span>
<span class="t" style="left:14.30px;top:82.15px;font-size:14px;color:#666666;letter-spacing:-0.815px;">Prozess-ID</span>
<span class="t" style="left:247.10px;top:82.15px;font-size:14px;color:#404040;letter-spacing:-0.349px;">7536</span>
<span class="t" style="left:14.30px;top:116.25px;font-size:14px;color:#666666;letter-spacing:-0.856px;">SICS-Benutzer</span>
<span class="t" style="left:247.10px;top:116.25px;font-size:14px;color:#404040;letter-spacing:-0.140px;">SnmpConnector1.10.0.2537</span>
<span class="t" style="left:14.30px;top:150.35px;font-size:14px;color:#666666;letter-spacing:-0.727px;">CPU Auslastung</span>
<span class="t" style="left:247.10px;top:150.35px;font-size:14px;color:#404040;letter-spacing:0.163px;">0,00 %</span>
<span class="t" style="left:14.30px;top:184.45px;font-size:14px;color:#666666;letter-spacing:-0.699px;">Speicherauslastung</span>
<span class="t" style="left:247.10px;top:184.45px;font-size:14px;color:#404040;letter-spacing:-0.217px;">42,92 MiB</span>
</div>
</body></html>
